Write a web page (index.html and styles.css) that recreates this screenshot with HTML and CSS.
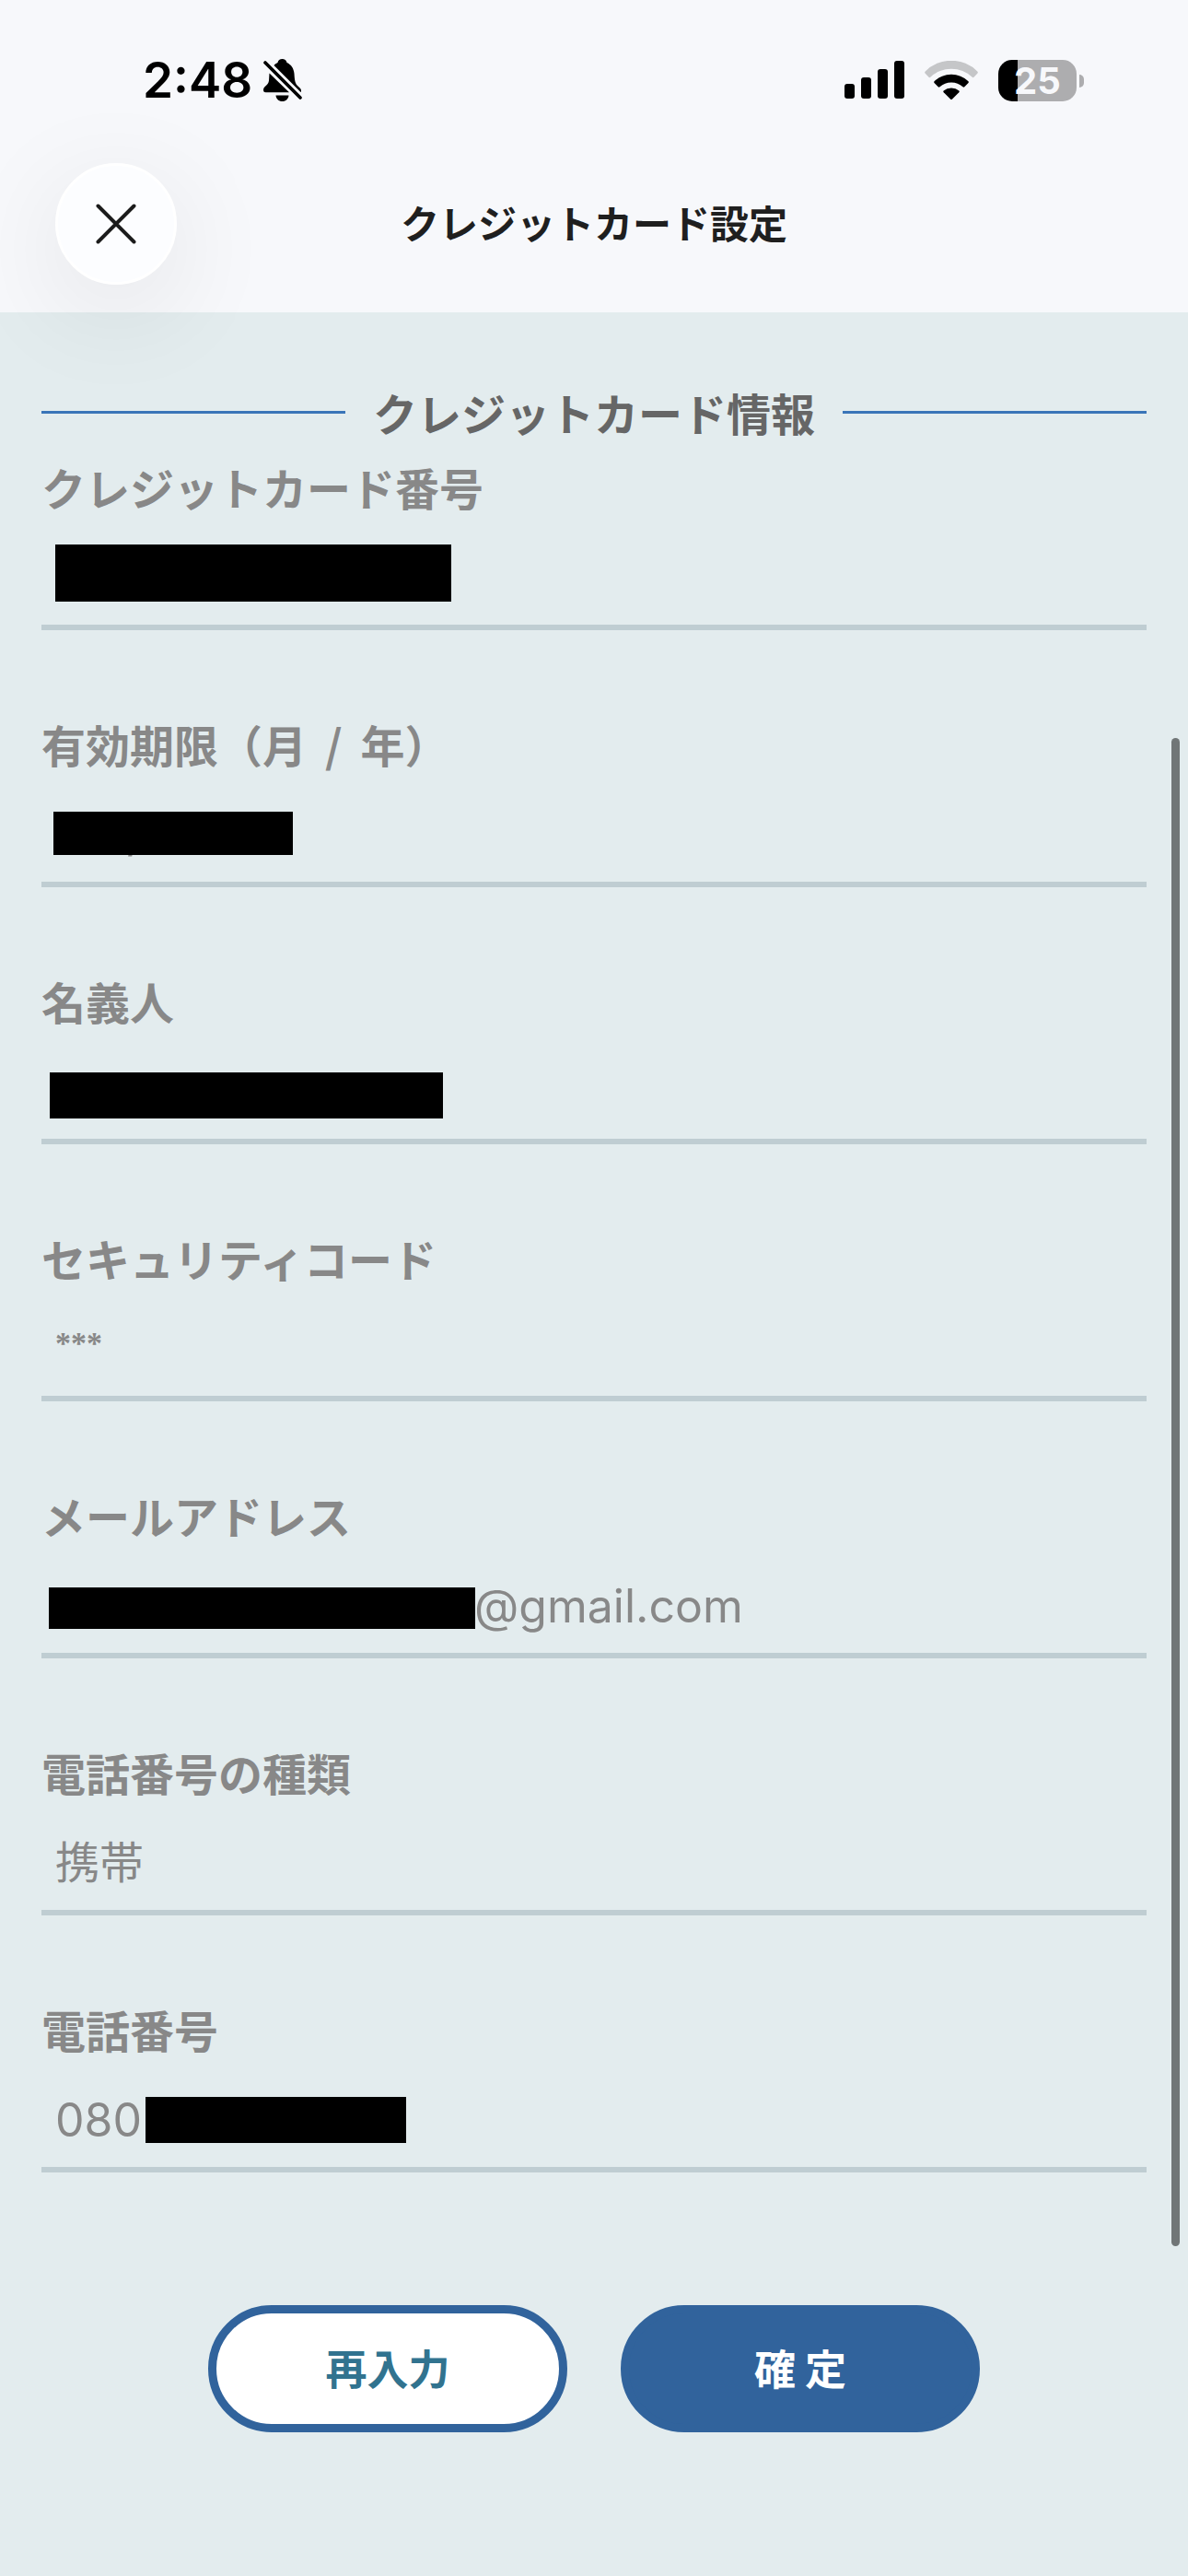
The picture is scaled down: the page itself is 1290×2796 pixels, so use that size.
FILE: index.html
```html
<!DOCTYPE html>
<html lang="ja">
	<head>
		<meta charset="UTF-8" />
		<meta name="viewport" content="width=device-width, initial-scale=1.0" />
		<title>クレジットカード設定</title>
		<link rel="stylesheet" href="styles.css">
	</head>
	<body>
		<header class="header">
			<div class="status-bar">
				<div class="status-left">
					<span class="time">2:48</span>
					<svg class="bell" width="42" height="46" viewBox="0 0 42 46">
						<path d="M11.5 7C13 5 14.500 4.500 15.500 4C16 1.500 17.800 0 20.500 0C23 0 25 1.500 25.500 4C30 6 33 10 33.500 16C34 24 34.500 27 38 30C40 32 41.500 33 41 35.500L40.500 36Z" />
						<path d="M6.500 15.500L28 36.300H2.500C0.500 36.300 0 35 0 33.500C0 29.500 5.500 29 6 23.500Z" />
						<path d="M13.500 39.500H27.500C27 43.500 24.500 46 20.500 46C16.500 46 14 43.500 13.500 39.500Z" />
						<path d="M2 4L40 42" fill="none" stroke="#000" stroke-width="3.600" stroke-linecap="round" />
					</svg>
				</div>
				<div class="status-right">
					<svg width="65" height="42" viewBox="0 0 65 42">
						<rect x="0" y="25" width="11" height="16" rx="3" />
						<rect x="18" y="18" width="11" height="23" rx="3" />
						<rect x="36" y="9" width="11" height="32" rx="3" />
						<rect x="54" y="0" width="11" height="41" rx="3" />
					</svg>
					<svg width="58" height="42" viewBox="0 0 58 42">
						<path fill="#c5c6c8" d="M0.500 11.700A40 40 0 0 1 57.500 11.700Q58.200 12.500 57.500 13.500L53.500 17.800Q52.600 18.500 51.700 17.700A33 33 0 0 0 6.300 17.700Q5.400 18.500 4.500 17.800L0.500 13.500Q-0.200 12.500 0.500 11.700Z" />
						<path d="M10.500 22.200A27 27 0 0 1 47.500 22.200Q48.200 23 47.500 24L43.300 28.300Q42.400 29 41.500 28.300A18.500 18.500 0 0 0 16.500 28.300Q15.600 29 14.700 28.300L10.500 24Q9.800 23 10.500 22.200Z" />
						<path d="M20.600 32.500A13 13 0 0 1 37.400 32.500Q38.200 33.400 37.300 34.300L29.800 41.700Q29 42.300 28.200 41.700L20.700 34.300Q19.800 33.400 20.600 32.500Z" />
					</svg>
					<div class="battery"><span>25</span></div>
				</div>
			</div>
			<div class="nav-bar">
				<button class="close-button" type="button" aria-label="閉じる">
					<svg width="44" height="44" viewBox="0 0 44 44">
						<path d="M2.500 2.500L41.500 41.500M41.500 2.500L2.500 41.500" fill="none" stroke="#1c1c1c" stroke-width="4" stroke-linecap="round" />
					</svg>
				</button>
				<h1>クレジットカード設定</h1>
			</div>
		</header>

		<main>
			<form class="card-form">
				<h2>クレジットカード情報</h2>

				<div class="form-group">
					<label for="card-number">クレジットカード番号</label>
					<input type="text" id="card-number" />
					<span class="mask mask-number"></span>
				</div>

				<div class="form-group">
					<label for="expiry">有効期限（月<span class="slash"> / </span>年）</label>
					<input type="text" id="expiry" class="expiry" value="/" />
					<span class="mask mask-expiry"></span>
				</div>

				<div class="form-group">
					<label for="holder">名義人</label>
					<input type="text" id="holder" />
					<span class="mask mask-holder"></span>
				</div>

				<div class="form-group">
					<label for="security-code">セキュリティコード</label>
					<input type="text" id="security-code" class="security-code" value="***" />
				</div>

				<div class="form-group">
					<label for="email">メールアドレス</label>
					<input type="text" id="email" class="email" value="@gmail.com" />
					<span class="mask mask-email"></span>
				</div>

				<div class="form-group">
					<label for="phone-type">電話番号の種類</label>
					<select id="phone-type">
						<option>携帯</option>
					</select>
				</div>

				<div class="form-group">
					<label for="phone">電話番号</label>
					<input type="text" id="phone" value="080" />
					<span class="mask mask-phone"></span>
				</div>

				<div class="buttons">
					<button class="reset-button" type="button">再入力</button>
					<button class="submit-button" type="button">確 定</button>
				</div>
			</form>
		</main>

		<div class="scroll-thumb"></div>
	</body>
</html>
```

FILE: styles.css
```css
* {
	box-sizing: border-box;
}
body {
	margin: 0;
	position: relative;
	background-color: #e3ecee;
	font-family: "Noto Sans CJK JP", sans-serif;
}
.header {
	background-color: #f7f8fb;
	padding: 60px 0 30px;
}
.status-bar {
	display: flex;
	justify-content: space-between;
	align-items: center;
	height: 54px;
	padding: 0 113px 0 155px;
	font-family: Inter, sans-serif;
}
.status-left,
.status-right {
	display: flex;
	align-items: center;
}
.status-left {
	gap: 12px;
}
.status-right {
	gap: 22px;
}
.time {
	font-size: 53px;
	font-weight: 600;
	line-height: 54px;
}
.battery {
	position: relative;
	width: 85px;
	height: 45px;
	margin-right: 8px;
	border-radius: 15px;
	background: linear-gradient(to right, #000 21px, #adadaf 21px);
	color: #f7f8fb;
	font-size: 40px;
	font-weight: 700;
	line-height: 45px;
	text-align: center;
}
.battery::after {
	content: "";
	position: absolute;
	right: -8px;
	top: 16px;
	width: 5px;
	height: 14px;
	border-radius: 0 5px 5px 0;
	background-color: #adadaf;
}
.nav-bar {
	display: grid;
	grid-template-columns: 1fr auto 1fr;
	align-items: center;
	padding: 63px 60px 0;
}
.close-button {
	display: flex;
	align-items: center;
	justify-content: center;
	width: 132px;
	height: 132px;
	padding: 0;
	border: 3px solid #fff;
	border-radius: 50%;
	background-color: #fcfdff;
	box-shadow: 0 27px 120px rgba(0, 0, 0, 0.09);
	cursor: pointer;
}
h1 {
	margin: 0;
	padding-bottom: 4px;
	color: #1f1f1f;
	font-size: 42px;
	font-weight: 600;
	line-height: 60px;
}
.card-form {
	padding: 72px 45px 156px;
}
h2 {
	display: flex;
	align-items: center;
	gap: 30px;
	margin: 0 0 9px;
	color: #666;
	font-size: 48px;
	font-weight: 700;
	line-height: 72px;
}
h2::before,
h2::after {
	content: "";
	flex: 1;
	height: 3px;
	background-color: #3a75b8;
}
.form-group {
	position: relative;
	margin-bottom: 87px;
}
label {
	display: block;
	color: #888;
	font-size: 48px;
	font-weight: 700;
	line-height: 72px;
}
.slash {
	margin: 0 9px;
}
input,
select {
	display: block;
	width: 100%;
	height: 120px;
	padding: 11px 15px 0;
	border: 0;
	border-bottom: 6px solid #bfcdd2;
	border-radius: 0;
	outline: none;
	appearance: none;
	background-color: transparent;
	color: #888;
	font-family: Inter, "Noto Sans CJK JP", sans-serif;
	font-size: 50px;
}
select {
	font-size: 48px;
}
.security-code {
	padding: 0 15px;
	font-family: "Liberation Serif", serif;
	font-size: 34px;
	font-weight: 700;
}
.expiry {
	padding-left: 93px;
}
.email {
	padding-left: 470px;
}
/* 個人情報の目隠し */
.mask {
	position: absolute;
	background-color: #000;
}
.mask-number {
	left: 15px;
	bottom: 31px;
	width: 430px;
	height: 62px;
}
.mask-expiry {
	left: 13px;
	bottom: 35px;
	width: 260px;
	height: 47px;
}
.mask-holder {
	left: 9px;
	bottom: 28px;
	width: 427px;
	height: 50px;
}
.mask-email {
	left: 8px;
	bottom: 32px;
	width: 463px;
	height: 45px;
}
.mask-phone {
	left: 113px;
	bottom: 32px;
	width: 283px;
	height: 50px;
}
.buttons {
	display: flex;
	justify-content: center;
	gap: 58px;
	padding-top: 57px;
}
.buttons button {
	width: 390px;
	height: 138px;
	padding: 0 0 3px;
	border: 9px solid #31639c;
	border-radius: 69px;
	font-family: inherit;
	font-size: 45px;
	font-weight: 600;
	cursor: pointer;
}
.buttons .reset-button {
	background-color: #fff;
	color: #31738f;
}
.buttons .submit-button {
	background-color: #31639c;
	color: #fff;
}
.scroll-thumb {
	position: absolute;
	top: 801px;
	right: 9px;
	width: 9px;
	height: 1637px;
	border-radius: 5px;
	background-color: #717677;
}
@media (max-width: 900px) {
	.scroll-thumb {
		display: none;
	}
}
```
